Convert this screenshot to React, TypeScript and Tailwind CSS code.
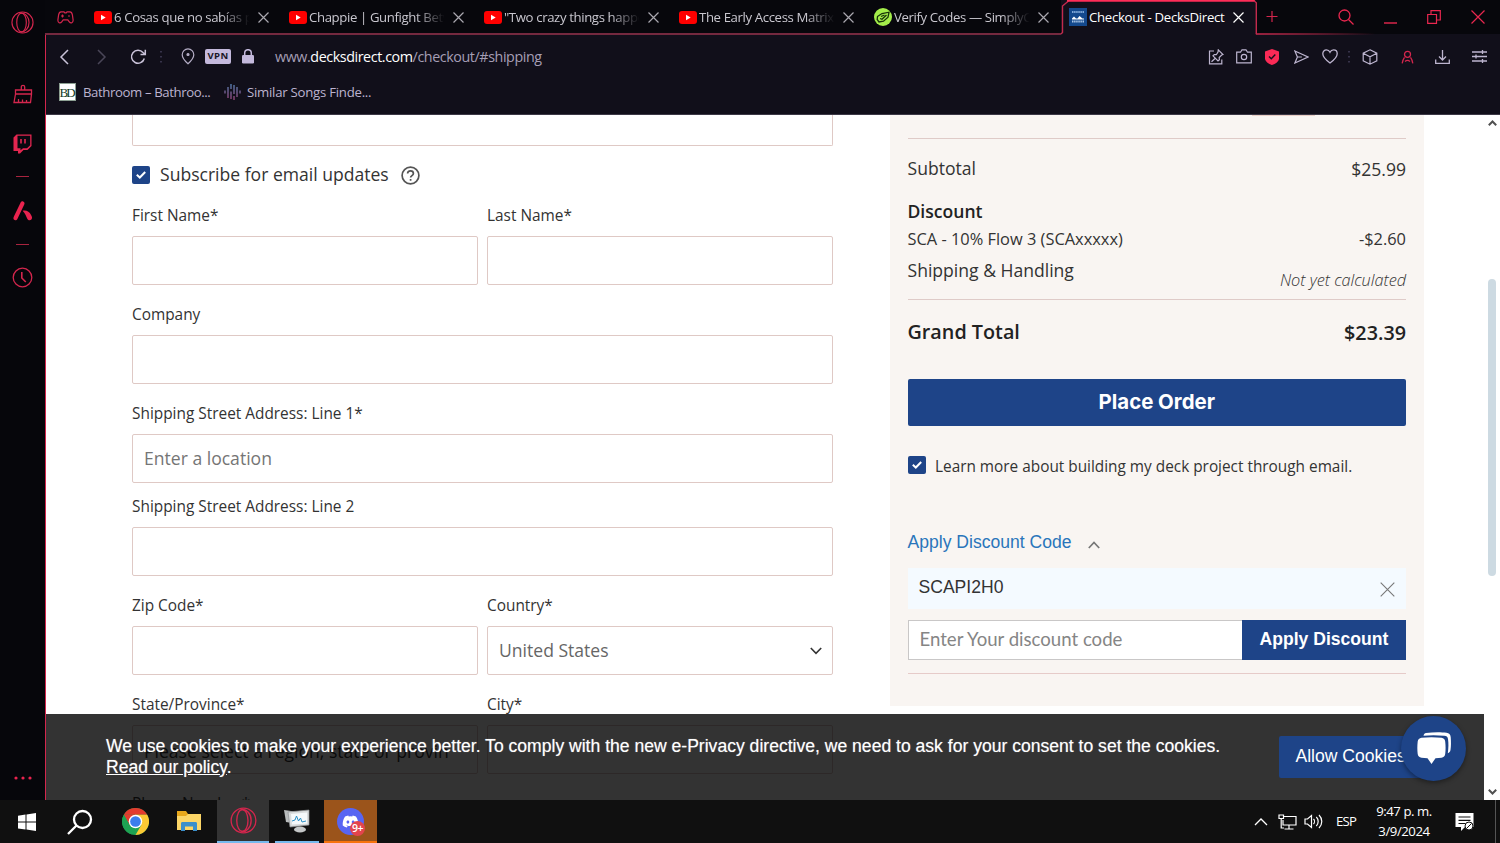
import React from 'react';
import { FaDiscord } from 'react-icons/fa';

interface Tab {
  title: string;
  icon: 'youtube' | 'simply' | 'decks';
  active?: boolean;
}

const TABS: Tab[] = [
  { title: '6 Cosas que no sabías p', icon: 'youtube' },
  { title: 'Chappie | Gunfight Betw', icon: 'youtube' },
  { title: '"Two crazy things happe', icon: 'youtube' },
  { title: 'The Early Access Matrix', icon: 'youtube' },
  { title: 'Verify Codes — SimplyC', icon: 'simply' },
  { title: 'Checkout - DecksDirect', icon: 'decks', active: true }
];

const OperaIcon = ({ size }: { size: number }) => (
  <svg width={size} height={size} viewBox="0 0 24 24" fill="none" stroke="#d3264d" strokeWidth="1.2">
    <circle cx="12" cy="12" r="11" />
    <ellipse cx="11" cy="12" rx="5" ry="9.8" />
    <path d="M10 2.300c5-.8 8.800 4 8.800 9.700s-3.800 10.500-8.800 9.700" />
  </svg>
);

const CloseIcon = ({ size = 11, color = '#b9b7c0' }: { size?: number; color?: string }) => (
  <svg width={size} height={size} viewBox="0 0 11 11" stroke={color} strokeWidth={size > 11 ? 0.8 : 1.2}>
    <path d="M.5.5l10 10M10.500.5l-10 10" />
  </svg>
);

const TabIcon = ({ icon }: { icon: Tab['icon'] }) => {
  if (icon === 'youtube') {
    return (
      <svg width="18" height="13" viewBox="0 0 18 13">
        <rect width="18" height="13" rx="3" fill="#f00" />
        <path d="M7 3.800v5.400l4.700-2.700z" fill="#fff" />
      </svg>
    );
  }
  if (icon === 'simply') {
    return (
      <svg width="18" height="18" viewBox="0 0 18 18" fill="none" stroke="#17330a" strokeWidth="1.300">
        <circle cx="9" cy="9" r="9" fill="#a4ee4a" stroke="none" />
        <path d="M3.500 8.500L8 5.500l7-1.300-1 5-4.500 4-4.500.8-1.800-2.500z" />
        <path d="M6 10.500l2 .8 4.500-4.300M7 8.500l3.500-1.500" />
      </svg>
    );
  }
  return (
    <svg width="18" height="18" viewBox="0 0 18 18">
      <rect width="18" height="18" fill="#14498d" />
      <path d="M3 4h12" stroke="#7fa8d8" strokeWidth="1.800" strokeDasharray="1.500 .6" />
      <path d="M3 10.500l2-2 2 2h1.500l2-2.500 3 2.500H15v1H3z" fill="#fff" />
      <path d="M3 13.500h12" stroke="#a9c5e6" strokeWidth="2" strokeDasharray="1.500 .6" />
    </svg>
  );
};

const Sidebar = () => (
  <aside className="flex w-[45px] shrink-0 flex-col items-center bg-[#06060b] pt-[11px]">
    <OperaIcon size={23} />
    <svg className="mt-[50px]" width="20" height="20" viewBox="0 0 20 20" fill="none" stroke="#d3264d" strokeWidth="1.300">
      <path d="M8.300 6V3a1.700 1.700 0 013.400 0v3M2.500 6h16v4h-16zM2.500 10L1 18.500h16.500l1-8.500M5.500 18v-3M9.500 18v-2.500M13.500 18v-2" />
    </svg>
    <svg className="mt-[30px]" width="19" height="20" viewBox="0 0 19 20">
      <path d="M3.500.5H18.500v11.500l-4 4h-4l-3.500 3.500H5v-2.500H.5V3.500z" fill="#e32650" />
      <path d="M4.500 1.800h12.700v9.400l-3.200 3H10l-2.500 2v-2h-3z" fill="#090910" />
      <path d="M8 5v4.500M12 5v4.500" stroke="#e32650" strokeWidth="1.600" />
    </svg>
    <div className="mt-[22px] h-px w-[13px] bg-[#a8243f]" />
    <svg className="mt-[24px]" width="20" height="20" viewBox="0 0 20 20" fill="#e9234f">
      <path d="M8 .8C9-.3 10.800.3 11.300 1.600c.4 1 .2 1.700-.4 2.700L4.500 17.800C3.700 19.500 1.900 19.800.9 18.600c-.7-.9-.6-1.800 0-3z" />
      <path d="M9.600 9.800c4-.8 6.600.8 8.600 4.400 1 1.700 1.200 3 .2 4.300-1.200 1.300-3.200 1-4-.5-1.200-2.400-2.300-5.800-4.800-8.200z" />
    </svg>
    <div className="mt-[23px] h-px w-[13px] bg-[#a8243f]" />
    <svg className="mt-[22px]" width="21" height="21" viewBox="0 0 21 21" fill="none" stroke="#d3264d" strokeWidth="1.300">
      <circle cx="10.500" cy="10.500" r="9.300" />
      <path d="M9.800 5v6l4 4" strokeWidth="1.600" />
    </svg>
    <svg className="mt-auto mb-[20px]" width="18" height="4" viewBox="0 0 18 4" fill="#e9234f">
      <circle cx="2" cy="2" r="1.600" />
      <circle cx="9" cy="2" r="1.600" />
      <circle cx="16" cy="2" r="1.600" />
    </svg>
  </aside>
);

const TabStrip = () => (
  <div className="relative flex h-[34px] items-center bg-[#07070c] font-['Open_Sans',sans-serif] text-[13.2px] tracking-[-0.38px]">
    <div className="flex w-[41px] pl-3">
      <svg width="17" height="13" viewBox="0 0 17 13" fill="none" stroke="#d3264d" strokeWidth="1.200">
        <path d="M4 .8h3l.8 1h1.400l.8-1h3c1.500 0 2 1 2.400 3l.7 5c.3 3-2.300 4-3.800 2l-1.500-2H6.200l-1.500 2C3.200 12.800.6 11.800.9 8.800l.7-5C2 1.800 2.500.8 4 .8z" />
        <path d="M4 5h3M5.500 3.500v3M11 5h2" />
      </svg>
    </div>
    {TABS.map(tab => (
      <div
        key={tab.title}
        className={`flex h-full w-[195px] shrink-0 items-center pl-2 ${tab.active ? 'bg-[#110f1a] text-white' : 'text-[#c9c7cf]'}`}
      >
        <span className="flex w-[18px] shrink-0"><TabIcon icon={tab.icon} /></span>
        <span
          className={`mt-[2px] ml-[2px] w-[137px] overflow-hidden whitespace-nowrap ${tab.active ? 'tracking-[-0.3px]' : '[mask-image:linear-gradient(to_right,black_78%,transparent_99%)]'}`}
        >
          {tab.title}
        </span>
        <span className="ml-[7px]"><CloseIcon color={tab.active ? '#fff' : '#aaa8b0'} /></span>
      </div>
    ))}
    <svg className="absolute top-0 left-0" width="1455" height="36" viewBox="0 0 1455 36" fill="none">
      <defs>
        <linearGradient id="edge" x1="1212" x2="1330" y1="0" y2="0" gradientUnits="userSpaceOnUse">
          <stop stopColor="#c0284b" />
          <stop offset="1" stopColor="#c0284b" stopOpacity="0" />
        </linearGradient>
      </defs>
      <path d="M0 34h1016" stroke="#74293f" strokeWidth="2" />
      <path d="M1016 34l1.500-1.500V6l6-5" stroke="#c32a4d" strokeWidth="1.400" />
      <path d="M1022 .8h188" stroke="#ff2d58" strokeWidth="1.800" />
      <path d="M1209 .8l2.300 2V34" stroke="#c32a4d" strokeWidth="1.400" />
      <path d="M1211 33.700h120v.6h-120z" fill="url(#edge)" stroke="url(#edge)" strokeWidth=".8" />
    </svg>
    <div className="flex items-center pl-[10px]">
      <svg width="12" height="12" viewBox="0 0 12 12" stroke="#d3264d" strokeWidth="1.200"><path d="M6 0v11M.5 5.500h11" /></svg>
      <svg className="ml-[60px]" width="17" height="17" viewBox="0 0 17 17" fill="none" stroke="#e9274f" strokeWidth="1.300">
        <circle cx="6.500" cy="6.500" r="5.500" />
        <path d="M10.500 10.500l5 5" />
      </svg>
      <svg className="ml-[29px]" width="13" height="14" viewBox="0 0 13 14" stroke="#e9274f" strokeWidth="1.400"><path d="M0 13h13" /></svg>
      <svg className="ml-[30px]" width="14" height="14" viewBox="0 0 14 14" fill="none" stroke="#e9274f" strokeWidth="1.200">
        <path d="M.7 4.500h8.800v8.800H.7zM4 4.500V.7h9.300v9.300H9.500" />
      </svg>
      <svg className="ml-[30px]" width="14" height="14" viewBox="0 0 14 14" stroke="#e9274f" strokeWidth="1.200"><path d="M.5.5l13 13M13.500.5l-13 13" /></svg>
    </div>
  </div>
);

const Toolbar = () => (
  <div className="flex h-[43px] items-center pr-[13px] pl-[13px] font-['Open_Sans',sans-serif]">
    <svg width="11" height="16" viewBox="0 0 11 16" fill="none" stroke="#c9c2d8" strokeWidth="1.500"><path d="M9 1L2 8l7 7" /></svg>
    <svg className="ml-[26px]" width="11" height="16" viewBox="0 0 11 16" fill="none" stroke="#4a4658" strokeWidth="1.500"><path d="M2 1l7 7-7 7" /></svg>
    <svg className="ml-[23px]" width="17" height="16" viewBox="0 0 17 16" fill="none" stroke="#c9c2d8" strokeWidth="1.500">
      <path d="M14.300 9.500A6.500 6.500 0 1113 3.500L15 5.300M15.300.8V5.500H10.500" />
    </svg>
    <svg className="ml-[13px]" width="3" height="13" viewBox="0 0 3 13" fill="#37334a">
      <rect y="1" width="2" height="1.500" /><rect y="6" width="2" height="1.500" /><rect y="11" width="2" height="1.500" />
    </svg>
    <svg className="ml-[18px]" width="14" height="17" viewBox="0 0 14 17" fill="none" stroke="#b5aec6" strokeWidth="1.200">
      <path d="M7 15.800C4 13 1.200 10 1.200 6.700a5.800 5.800 0 0111.600 0C12.800 10 10 13 7 15.800z" />
      <circle cx="7" cy="6.500" r="1" fill="#b5aec6" />
    </svg>
    <div className="ml-[10px] flex h-[15px] w-[26px] items-center justify-center rounded-[2px] bg-[#c4b9dc] text-[9.5px] font-bold tracking-[0.4px] text-[#1a1626]">VPN</div>
    <svg className="ml-[11px]" width="12" height="15" viewBox="0 0 12 15" fill="#c4b9dc">
      <rect y="6" width="12" height="8.500" rx="1.300" />
      <path d="M2.700 7V4a3.300 3.300 0 016.600 0v3" fill="none" stroke="#c4b9dc" strokeWidth="1.500" />
    </svg>
    <div className="ml-[21px] text-[14.3px] tracking-[-0.42px] whitespace-nowrap text-[#a59eb5]">
      www.<span className="text-white">decksdirect.com</span>/checkout/#shipping
    </div>
    <div className="ml-auto flex items-center text-[#bdb5cf]">
      <svg width="16" height="16" viewBox="0 0 16 16" fill="none" stroke="currentColor" strokeWidth="1.200">
        <path d="M6 2H1.500v12.800h12.300V10.500M10.300.8L15 5.500l-1.300.5-2.500 2.500.2 2.200-1.400 1.300L5 6.800l1.300-1.200 2 .1L10 3zM7.300 9.300L3.500 12.800" />
      </svg>
      <svg className="ml-[12px]" width="16" height="15" viewBox="0 0 16 15" fill="none" stroke="currentColor" strokeWidth="1.200">
        <path d="M.7 3.200h3.800L6 .8h4l1.500 2.400h3.800v10.600H.7z" /><circle cx="8" cy="8" r="2.700" />
      </svg>
      <svg className="ml-[13px]" width="14" height="16" viewBox="0 0 14 16">
        <path d="M7 0l7 2.500v7c0 3-3.500 5.300-7 6.500-3.500-1.200-7-3.500-7-6.500v-7z" fill="#fb2a56" />
        <path d="M4 7.500l2.300 2.300L10.300 5.500" fill="none" stroke="#14111c" strokeWidth="1.400" />
      </svg>
      <svg className="ml-[15px]" width="15" height="14" viewBox="0 0 15 14" fill="none" stroke="currentColor" strokeWidth="1.200">
        <path d="M.9 1L14 7 .9 13l2.500-6zM3.400 7h4.500" />
      </svg>
      <svg className="ml-[13px]" width="16" height="15" viewBox="0 0 16 15" fill="none" stroke="currentColor" strokeWidth="1.300">
        <path d="M8 14C4 11 .8 8 .8 4.700.8 2.500 2.400.9 4.400.9 6 .9 7.300 1.800 8 3.300 8.700 1.800 10 .9 11.600.9c2 0 3.600 1.600 3.600 3.800C15.200 8 12 11 8 14z" />
      </svg>
      <svg className="ml-[9px]" width="3" height="13" viewBox="0 0 3 13" fill="#37334a">
        <rect x="1" y="1" width="2" height="1.500" /><rect x="1" y="6" width="2" height="1.500" /><rect x="1" y="11" width="2" height="1.500" />
      </svg>
      <svg className="ml-[12px]" width="16" height="16" viewBox="0 0 16 16" fill="none" stroke="currentColor" strokeWidth="1.200">
        <path d="M8 .8l6.800 3.400v7.600L8 15.200l-6.800-3.400V4.200zM1.200 4.200L8 7.800l6.800-3.600M8 7.800v7.400" />
      </svg>
      <svg className="ml-[23px]" width="13" height="14" viewBox="0 0 13 14" fill="none" stroke="#d3264d" strokeWidth="1.300">
        <circle cx="6.500" cy="4.300" r="3" /><path d="M3.500 7.300C2.200 9 1.500 11 1.200 13.300M9.500 7.300c1.300 1.700 2 3.700 2.300 6M4 11.500c1.500-1.300 3.500-1.300 5 0" />
      </svg>
      <svg className="ml-[21px]" width="15" height="14" viewBox="0 0 15 14" fill="none" stroke="currentColor" strokeWidth="1.300">
        <path d="M7.500 0v9.500M4 6.500L7.500 10 11 6.500M.7 9.500v3.800h13.600V9.500" />
      </svg>
      <svg className="ml-[22px]" width="15" height="13" viewBox="0 0 15 13" stroke="currentColor" strokeWidth="1.300">
        <path d="M0 2h15M0 6.500h15M0 11h15M10.500 0v4M4 4.500v4M10.500 9v4" />
      </svg>
    </div>
  </div>
);

const Bookmarks = () => (
  <div className="flex h-[37px] items-start border-b border-[#3c3846] pt-[4px] pl-[13px] font-['Open_Sans',sans-serif] text-[13.2px] leading-[20px] tracking-[-0.4px] whitespace-nowrap text-[#bcb3cf]">
    <div className="mt-px flex h-[18px] w-[17px] items-center justify-center border border-[#8da093] bg-white pr-[2px] font-['Liberation_Serif',serif] text-[13px] leading-none tracking-[-2px] text-[#143b28]">
      BD
    </div>
    <span className="ml-[7px] w-[128px]">Bathroom – Bathroo...</span>
    <svg className="mt-px ml-[13px] shrink-0" width="17" height="18" viewBox="0 0 17 18" strokeWidth="1.500">
      <defs>
        <linearGradient id="bars" x1="0" x2="0" y1="0" y2="18" gradientUnits="userSpaceOnUse">
          <stop stopColor="#4a7ba8" />
          <stop offset="1" stopColor="#8e3a6c" />
        </linearGradient>
      </defs>
      <path d="M1 7.500v3M4 4v11M7 1v5M7 8.500v7.500M10 2v9M10 13v4M13 4v10M16 7.500v3" stroke="url(#bars)" />
    </svg>
    <span className="ml-[6px] tracking-[-0.25px]">Similar Songs Finde...</span>
  </div>
);

interface FieldProps {
  label: string;
  className?: string;
  children?: React.ReactNode;
}

const Field: React.FC<FieldProps> = ({ label, className = '', children }) => (
  <div className={className}>
    <div className="h-[20px] pt-px text-[15.4px] leading-[20px] text-[#333]">{label}</div>
    <div className="mt-[11px] flex h-[49px] items-center justify-between rounded-[2px] border border-[#dfc9c5] bg-white pr-[10px] pl-[11px] text-[17.57px] whitespace-nowrap text-[#666]">
      {children}
    </div>
  </div>
);

const Checkbox = () => (
  <span className="flex h-[18px] w-[18px] shrink-0 items-center justify-center rounded-[2px] bg-[#1e4488]">
    <svg width="10" height="8" viewBox="0 0 10 8" fill="none" stroke="#fff" strokeWidth="2"><path d="M.8 3.800L3.800 6.500 9.200 1" /></svg>
  </span>
);

const ShippingForm = () => (
  <form className="w-[701px]">
    <div className="h-[31px] rounded-b-[2px] border border-t-0 border-[#dfc9c5]" />
    <div className="mt-[14px] flex h-[30px] items-center text-[17.57px] text-[#333]">
      <Checkbox />
      <span className="ml-[10px] w-[240px] -mt-px whitespace-nowrap">Subscribe for email updates</span>
      <svg className="ml-px" width="19" height="19" viewBox="0 0 19 19" fill="none" stroke="#555" strokeWidth="1.700">
        <circle cx="9.500" cy="9.500" r="8.400" />
        <path d="M6.600 7.600c0-1.600 1.200-2.700 2.900-2.700s2.900 1 2.900 2.500c0 2.200-2.800 2.200-2.800 4.200M9.600 13v1.800" />
      </svg>
    </div>
    <div className="mt-[15px] grid grid-cols-2 gap-x-[9px] gap-y-[19px]">
      <Field label="First Name*" />
      <Field label="Last Name*" />
      <Field label="Company" className="col-span-2" />
      <Field label="Shipping Street Address: Line 1*" className="col-span-2">
        <span className="text-[#757575]">Enter a location</span>
      </Field>
      <Field label="Shipping Street Address: Line 2" className="col-span-2 -mt-[6px]" />
      <Field label="Zip Code*" />
      <Field label="Country*">
        United States
        <svg width="12" height="8" viewBox="0 0 12 8" fill="none" stroke="#333" strokeWidth="1.600"><path d="M.8 1L6 6.300 11.200 1" /></svg>
      </Field>
      <Field label="State/Province*">
        <span className="mt-[3px] text-[#333]">Please select a region, state or provin</span>
      </Field>
      <Field label="City*" />
      <Field label="Phone Number*" className="col-span-2" />
    </div>
  </form>
);

const OrderSummary = () => (
  <section className="h-[591px] w-[534px] bg-[#f9f5f2] pr-[18px] pl-[17.5px] text-[#333]">
    <div className="flex h-[24px] justify-end border-b border-[#dfcbc8] pr-[91px]">
      <div className="h-px w-[63px] bg-[#e9cfc6]" />
    </div>
    <div className="flex h-[60px] items-center justify-between text-[17.57px]">
      <span className="-mt-px">Subtotal</span>
      <span className="mt-px">$25.99</span>
    </div>
    <div className="flex h-[24px] items-center text-[17.57px] font-semibold text-[#222]">Discount</div>
    <div className="flex h-[30px] items-center justify-between pt-[2px] text-[16.4px]">
      <span>SCA - 10% Flow 3 (SCAxxxxx)</span>
      <span>-$2.60</span>
    </div>
    <div className="flex h-[47px] justify-between border-b border-[#dfcbc8]">
      <span className="text-[17.57px] leading-[35px]">Shipping &amp; Handling</span>
      <span className="text-[16.3px] leading-[55px] font-light italic">Not yet calculated</span>
    </div>
    <div className="flex h-[64px] items-center justify-between text-[19.77px] font-semibold text-[#222]">
      <span className="-mt-px">Grand Total</span>
      <span className="mt-px">$23.39</span>
    </div>
    <button className="mt-[15px] flex h-[47px] w-full items-center justify-center rounded-[2px] bg-[#1e4488] font-['Inter',sans-serif] text-[20.4px] font-bold text-white">
      Place Order
    </button>
    <div className="mt-[30px] flex h-[18px] items-center text-[15.37px]">
      <Checkbox />
      <span className="mt-[3px] ml-[9.5px]">Learn more about building my deck project through email.</span>
    </div>
    <div className="mt-[54px] flex h-[28px] items-center font-['Liberation_Sans',sans-serif] text-[17.57px] text-[#2a75bb]">
      Apply Discount Code
      <svg className="mt-[5px] ml-[16px]" width="12" height="8" viewBox="0 0 12 8" fill="none" stroke="#777" strokeWidth="1.700"><path d="M.8 7L6 1.500 11.200 7" /></svg>
    </div>
    <div className="mt-[12px] flex h-[41px] items-center justify-between bg-[#f4faff] pr-[11px] pl-[11px] font-['Liberation_Sans',sans-serif] text-[17.57px]">
      <span className="-mt-[2px]">SCAPI2H0</span>
      <span className="mt-[2px]"><CloseIcon size={15} color="#777" /></span>
    </div>
    <div className="mt-[11px] flex h-[40px]">
      <div className="flex flex-1 items-center border border-r-0 border-[#c9c7c7] bg-white pl-[11px] font-['Lato',sans-serif] text-[18.6px] text-[#858585]">
        Enter Your discount code
      </div>
      <button className="w-[164px] bg-[#1e4488] pb-[2px] font-['Liberation_Sans',sans-serif] text-[17.57px] font-bold text-white">Apply Discount</button>
    </div>
    <div className="mt-[13px] h-px bg-[#e6cbc9]" />
  </section>
);

const CookieBar = () => (
  <div className="absolute bottom-0 left-0 flex h-[86px] w-[1438px] bg-black/80 pl-[60px] font-['Liberation_Sans',sans-serif] text-[17.57px] text-white">
    <p className="w-[1173px] pt-[22px] leading-[21px] whitespace-nowrap [text-shadow:0_0_1px_rgba(255,255,255,0.5)]">
      We use cookies to make your experience better. To comply with the new e-Privacy directive, we need to ask for your consent to set the cookies.
      <br />
      <span className="underline">Read our policy</span>.
    </p>
    <button className="mt-[22px] flex h-[42px] w-[143px] items-center rounded-[2px] bg-[#1e4488] pl-[16.5px] pb-px whitespace-nowrap">Allow Cookies</button>
    <div className="absolute top-[2px] right-[18px] flex h-[65px] w-[65px] items-center justify-center rounded-full bg-[#1e4488] shadow-[0_2px_5px_rgba(0,0,0,0.4)]">
      <svg width="36" height="34" viewBox="0 0 36 34" fill="#fff">
        <path d="M10 1c7-1 15-1 20.500-.3 2.500.3 4 1.800 4.200 4.300.4 5 .4 9-.2 13-.3 1.700-1.300 2.800-2.700 3.300.8-5.500.8-10 .2-14.300C31.700 4.800 30.500 4 28.300 3.800 21.500 3 14 3 7.500 3.700 8 2 8.700 1.200 10 1z" />
        <path d="M5.500 5.800c6-.8 14-.8 20 0 2.200.3 3.500 1.600 3.700 3.800.5 4.500.5 8.500 0 12.500-.3 2.200-1.500 3.400-3.700 3.700l-6 .5L15.500 32l-4-5.700-6-.5C3.300 25.500 2 24.300 1.700 22.100c-.5-4-.5-8 0-12.500.3-2.200 1.600-3.500 3.800-3.800z" />
      </svg>
    </div>
  </div>
);

const Scrollbar = () => (
  <div className="flex w-[16px] shrink-0 flex-col items-center bg-white">
    <svg className="mt-[5px]" width="9" height="6" viewBox="0 0 9 6" fill="none" stroke="#505050" strokeWidth="2"><path d="M.8 5.200L4.500 1.500 8.200 5.200" /></svg>
    <div className="mt-[153px] h-[297px] w-[8px] rounded-full bg-[#cddae2]" />
    <svg className="mt-auto mb-[5px]" width="9" height="6" viewBox="0 0 9 6" fill="none" stroke="#505050" strokeWidth="2"><path d="M.8.8L4.500 4.500 8.200.8" /></svg>
  </div>
);

const Taskbar = () => (
  <footer className="flex h-[43px] items-center bg-[#101010] text-white">
    <div className="flex w-[54px] justify-center">
      <svg width="18" height="18" viewBox="0 0 18 18" fill="#fff">
        <path d="M0 2.700L7.500 1.600v7H0zM8.500 1.500L18 0v8.600H8.500zM0 9.600h7.500v7L0 15.500zM8.500 9.600H18V18l-9.500-1.400z" />
      </svg>
    </div>
    <div className="flex w-[54px] justify-center pr-[3px]">
      <svg width="26" height="26" viewBox="0 0 26 26" fill="none" stroke="#fff" strokeWidth="2.300">
        <circle cx="15.500" cy="10.500" r="8.500" /><path d="M9.500 16.500L1 25" />
      </svg>
    </div>
    <div className="flex w-[54px] justify-center">
      <svg width="27" height="27" viewBox="0 0 48 48">
        <circle cx="24" cy="24" r="24" fill="#1ea353" />
        <path d="M3.200 12A24 24 0 0144.800 12H24z" fill="#e33b2e" />
        <path d="M44.800 12A24 24 0 0124 48l10.400-18L24 12z" fill="#fcc934" />
        <path d="M3.200 12l10.400 18L24 24V12z" fill="#e33b2e" />
        <path d="M3.200 12L13.600 30 24 36l-6 11.200A24 24 0 013.200 12z" fill="#1ea353" />
        <circle cx="24" cy="24" r="12" fill="#fff" />
        <circle cx="24" cy="24" r="9.500" fill="#3b7ded" />
      </svg>
    </div>
    <div className="flex w-[55px] justify-center pr-px">
      <svg width="24" height="21" viewBox="0 0 24 21">
        <path d="M0 0h9l2 3h13v16H0z" fill="#e8a81c" />
        <path d="M0 5h9l2-2h13v16H0z" fill="#fcd667" />
        <path d="M4 20v-7.500c0-1 .6-1.500 1.500-1.500h13c.9 0 1.500.5 1.500 1.500V20h-4v-4.500H8V20z" fill="#3b8fcb" />
      </svg>
    </div>
    <div className="flex h-full w-[52px] items-center justify-center border-b-2 border-[#76b9ed] bg-[#333]">
      <OperaIcon size={27} />
    </div>
    <div className="ml-[6px] flex h-full w-[44px] items-center justify-center border-b-2 border-[#76b9ed]">
      <svg width="26" height="24" viewBox="0 0 26 24">
        <path d="M0 1l14 2v12L2 13z" fill="#b9bcbd" />
        <path d="M4 3l21-2v15L6 18z" fill="#d9dcdd" stroke="#8e9193" strokeWidth=".7" />
        <path d="M7 5l16-1.500v11L8 15.500z" fill="#f5f9fb" />
        <path d="M8 12l3-1 1.500-4 2 5 2-3 1.500 4 4-1" fill="none" stroke="#2a8fc5" strokeWidth="1" />
        <ellipse cx="16" cy="20.500" rx="6" ry="3" fill="#c4c7c8" />
      </svg>
    </div>
    <div className="ml-[5px] flex h-full w-[53px] items-center justify-center border-b-2 border-[#f7730c] bg-[#9b541b]">
      <div className="relative mt-[2px] flex h-[27px] w-[27px] items-center justify-center rounded-full bg-[#5865f2]">
        <FaDiscord size={17} />
        <span className="absolute -right-[1px] -bottom-[1px] flex h-[15px] w-[15px] items-center justify-center rounded-full bg-[#e3444c] font-['Open_Sans',sans-serif] text-[10.5px] font-semibold tracking-[-0.5px]">9+</span>
      </div>
    </div>
    <div className="ml-auto flex h-full items-center font-['Open_Sans',sans-serif] text-[13.2px]">
      <svg width="14" height="8" viewBox="0 0 14 8" fill="none" stroke="#fff" strokeWidth="1.300"><path d="M1 7l6-6 6 6" /></svg>
      <svg className="ml-[10px]" width="19" height="16" viewBox="0 0 19 16" fill="none" stroke="#fff" strokeWidth="1.200">
        <path d="M6 2.500h12V11H5V6M11 11v4M6.500 15h9M1 1h4.500v3.500H1zM3.200 4.500V14H6" />
      </svg>
      <svg className="ml-[7px]" width="19" height="15" viewBox="0 0 19 15" fill="none" stroke="#fff" strokeWidth="1.200">
        <path d="M1 5h2.500L7.500 1.500v12L3.500 10H1zM9.500 5c1.300 1.300 1.300 3.700 0 5M12.300 3c2.500 2.500 2.500 6.500 0 9M15 1c3.700 3.700 3.700 9.300 0 13" />
      </svg>
      <span className="ml-[13px] w-[21px] text-[13.2px] tracking-[-0.8px]">ESP</span>
      <div className="-mt-[2px] ml-[14px] w-[66px] text-center leading-[20px] tracking-[-0.45px] whitespace-nowrap">
        <div>9:47 p. m.</div>
        <div>3/9/2024</div>
      </div>
      <svg className="ml-[18px] mr-[21px]" width="19" height="18" viewBox="0 0 19 18">
        <path d="M.5 0h18v14H10l-4 4v-4H.5z" fill="#fff" />
        <path d="M3.500 4h12M3.500 7.300h12M3.500 10.500h7" stroke="#111" strokeWidth="1.200" />
        <circle cx="14" cy="13" r="4" fill="#fff" stroke="#111" /><path d="M11.500 15.500l5-5" stroke="#111" />
      </svg>
      <div className="mr-[4px] h-full w-px bg-[#555]" />
    </div>
  </footer>
);

export default function App() {
  return (
    <div className="flex h-[843px] w-[1500px] flex-col overflow-hidden">
      <div className="flex h-[800px]">
        <Sidebar />
        <div className="flex h-[800px] w-[1455px] flex-col">
          <TabStrip />
          <div className="flex min-h-0 flex-1 flex-col border-l border-[#d3264d] bg-[#110f1a]">
            <div className="h-px shrink-0" />
            <div className="shrink-0"><Toolbar /></div>
            <div className="shrink-0"><Bookmarks /></div>
            <div className="flex h-[685px] shrink-0 bg-white">
              <main className="relative flex w-[1438px] items-start justify-between overflow-hidden pr-[60px] pl-[86px] font-['Open_Sans',sans-serif]">
                <ShippingForm />
                <OrderSummary />
                <CookieBar />
              </main>
              <Scrollbar />
            </div>
          </div>
        </div>
      </div>
      <Taskbar />
    </div>
  );
}
